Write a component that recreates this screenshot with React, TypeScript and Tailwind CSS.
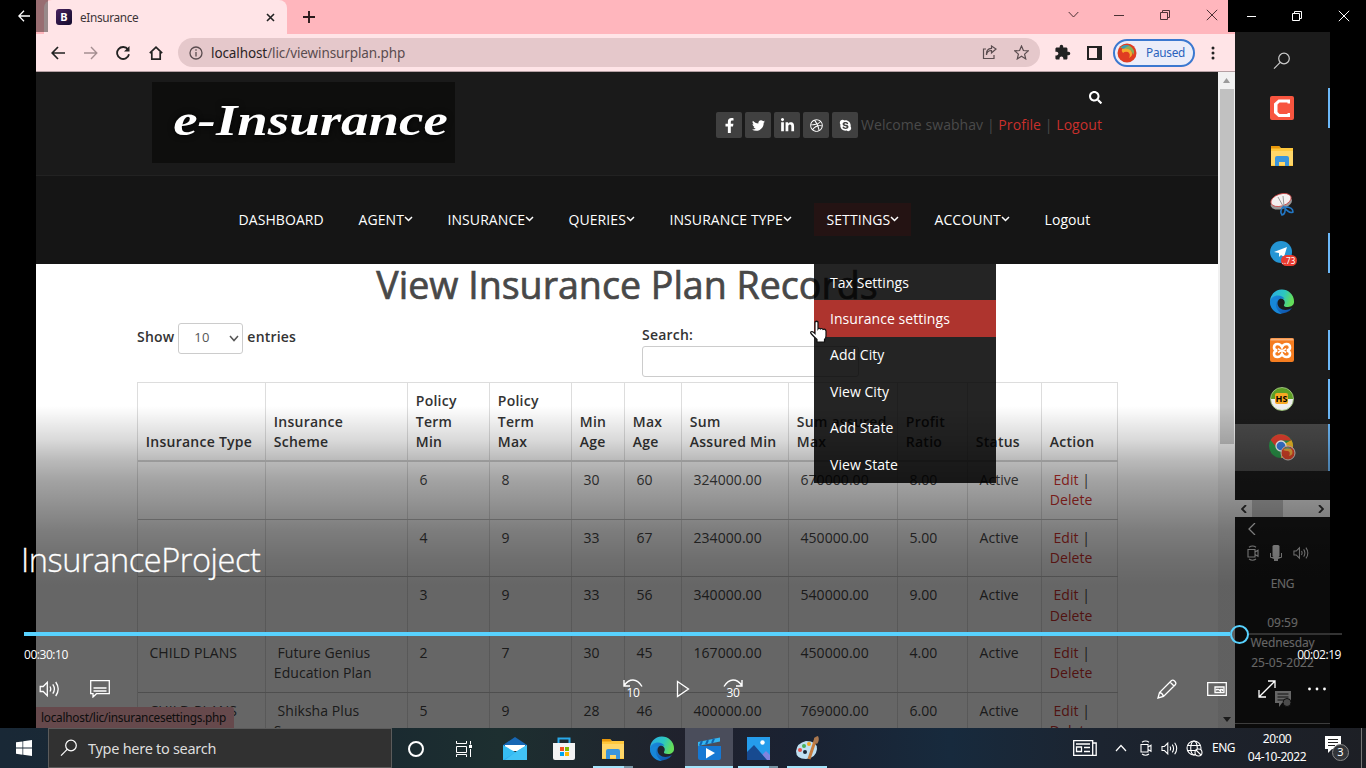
import React from 'react';
import { FaFacebookF, FaTwitter, FaLinkedinIn, FaDribbble, FaSkype, FaSearch } from 'react-icons/fa';
import { MdExtension } from 'react-icons/md';

type SvgProps = { className?: string };

const Stroke = ({ className = '', w = 16, h = 16, sw = 1, children }: { className?: string; w?: number; h?: number; sw?: number; children: React.ReactNode }) => (
  <svg className={`shrink-0 ${className}`} width={w} height={h} viewBox={`0 0 ${w} ${h}`} fill="none" stroke="currentColor" strokeWidth={sw}>
    {children}
  </svg>
);

const Chevron = () => (
  <Stroke w={9} h={6} sw={1.5}><path d="M1 1l3.5 3.5L8 1" /></Stroke>
);

const Restore = ({ className = '' }: SvgProps) => (
  <Stroke w={12} h={12} className={className}>
    <path d="M1.5 3.5h7v7h-7zM3.5 3.5v-2h7v7h-2" />
  </Stroke>
);

const Cross = ({ className = '' }: SvgProps) => (
  <Stroke w={12} h={12} className={className}><path d="M.8.8l10.4 10.4M11.2.8L.8 11.2" /></Stroke>
);

const Magnifier = ({ className = '' }: SvgProps) => (
  <Stroke w={18} h={18} sw={1.2} className={className}>
    <circle cx="11" cy="6.5" r="5.3" /><path d="M7.2 10.4L1 16.7" />
  </Stroke>
);

const Speaker = ({ className = '' }: SvgProps) => (
  <Stroke w={22} h={18} sw={1.3} className={className}>
    <path d="M1.2 6.5h3L8.3 2.300v13.400L4.200 11.500h-3zM11 6.500q1.500 2.500 0 5M13.800 4.300q3.200 4.700 0 9.400M16.700 2q5 7 0 14" />
  </Stroke>
);

const Meet = ({ className = '' }: SvgProps) => (
  <Stroke w={14} h={16} sw={1.1} className={className}>
    <path d="M2 4.500h7v7.500H2zM9 7l3-1.800v6L9 9.500M3 2.300Q6.500-.3 10 2.300M3 14q3.500 2.500 7 0" />
  </Stroke>
);

const Folder = () => (
  <svg width="24" height="22" viewBox="0 0 24 22">
    <path d="M1 1h8l2 2h12v18H1z" fill="#ffc83d" /><path d="M1 1h8l1.500 2.500H1z" fill="#e8970a" />
    <path d="M1 6h22v14H1z" fill="#ffd768" />
    <path d="M5 21v-8q0-2 2-2h10q2 0 2 2v8h-4v-4H9v4z" fill="#3a95dc" />
  </svg>
);

const Edge = () => (
  <svg width="26" height="26" viewBox="0 0 26 26">
    <defs>
      <linearGradient id="eg1" x1="0" y1="0" x2="1" y2=".3"><stop offset="0" stopColor="#2aa9e8" /><stop offset=".6" stopColor="#2cc7c0" /><stop offset="1" stopColor="#63dd5a" /></linearGradient>
      <linearGradient id="eg2" x1="0" y1="0" x2="1" y2="1"><stop offset="0" stopColor="#1b8fe0" /><stop offset="1" stopColor="#0d4fa8" /></linearGradient>
    </defs>
    <path d="M1 13a12 12 0 0 1 24-1c.500 4-2.500 6-6 6-3 0-4.500-1-4-2 2-3 0-7-5-7-5 0-8 2-9 4z" fill="url(#eg1)" />
    <path d="M1 13c0-4 4-6.500 8-6.500 3 0 5.500 1.500 6.500 3.500-4-1.500-7 .5-7 4 0 5 5 8 11 6.500 1.500-.4 2.500-.9 3.500-1.500A12 12 0 0 1 1 13z" fill="url(#eg2)" />
    <path d="M9 10.500c-4 4-2 11 4 14.400C6 25 1 19.500 1 13c2-2 5-3 8-2.500z" fill="#1787d8" />
  </svg>
);

const SocialBox = ({ children }: { children: React.ReactNode }) => (
  <div className="flex h-[26px] w-[26px] items-center justify-center rounded-[2px] bg-[#404040] text-[13px] text-white">{children}</div>
);

const navItems: [string, string, boolean][] = [
  ['DASHBOARD', 'w-[120px]', false],
  ['AGENT', 'w-[89px]', true],
  ['INSURANCE', 'w-[121px]', true],
  ['QUERIES', 'w-[101px]', true],
  ['INSURANCE TYPE', 'w-[157px]', true],
  ['SETTINGS', 'w-[108px]', true],
  ['ACCOUNT', 'w-[110px]', true],
  ['Logout', 'w-[60px]', false],
];

const menu = ['Tax Settings', 'Insurance settings', 'Add City', 'View City', 'Add State', 'View State'];

const heads = ['Insurance Type', 'Insurance\nScheme', 'Policy\nTerm\nMin', 'Policy\nTerm\nMax', 'Min\nAge', 'Max\nAge', 'Sum\nAssured Min', 'Sum assured\nMax', 'Profit\nRatio', 'Status', 'Action'];
const rows: string[][] = [
  ['', '', '6', '8', '30', '60', '324000.00', '670000.00', '8.00', 'Active'],
  ['', '', '4', '9', '33', '67', '234000.00', '450000.00', '5.00', 'Active'],
  ['', '', '3', '9', '33', '56', '340000.00', '540000.00', '9.00', 'Active'],
  ['CHILD PLANS', 'Future Genius\nEducation Plan', '2', '7', '30', '45', '167000.00', '450000.00', '4.00', 'Active'],
  ['CHILD PLANS', 'Shiksha Plus\nSuper', '5', '9', '28', '46', '400000.00', '769000.00', '6.00', 'Active'],
];
const cols = 'grid grid-cols-[128px_142px_82px_82px_53px_57px_107px_109px_70px_74px_76px]';

function ChromeBar() {
  return (
    <div className="flex h-[72px] flex-col bg-[#ffe4e7] font-['Noto_Sans',sans-serif]">
      <div className="flex h-[34px] bg-[#ffb6bd]">
        <div className="w-2 rounded-br-[8px] bg-[#ffb6bd]" />
        <div className="flex h-[34px] w-[243px] items-center rounded-t-[8px] bg-[#ffe4e7] pl-3 pr-[12px]">
          <div className="flex h-4 w-4 items-center justify-center rounded-[3px] bg-gradient-to-br from-[#4a2360] to-[#120a2c] text-[11px] font-bold text-white">B</div>
          <span className="ml-[8px] mt-px flex-1 text-[11.8px] tracking-[-0.35px] text-[#3c3437]">eInsurance</span>
          <Stroke w={9} h={9} sw={1.6} className="text-[#222]"><path d="M1 1l7 7M8 1L1 8" /></Stroke>
        </div>
        <div className="flex flex-1 items-center pl-[16px] text-[#2a1a1c]">
          <Stroke w={12} h={12} sw={1.9}><path d="M6 0v12M0 6h12" /></Stroke>
        </div>
        <div className="flex h-[29px] items-center gap-[35px] pr-[17px] text-[#4c3235]">
          <Stroke w={11} h={7}><path d="M.7 1l4.800 5L10.300 1" /></Stroke>
          <Stroke w={10} h={10}><path d="M0 5.500h10" /></Stroke>
          <Restore />
          <Cross />
        </div>
      </div>
      <div className="flex h-[37px] items-center pl-[15px] text-[#222]">
        <div className="flex w-[127px] items-center gap-[18.500px]">
          <Stroke w={14} h={14} sw={1.7}><path d="M14 7H1.500M7 1L1.200 7 7 13" /></Stroke>
          <Stroke w={14} h={14} sw={1.4} className="text-[#a58f92]"><path d="M0 7h12.500M7 1l5.800 6L7 13" /></Stroke>
          <Stroke w={14} h={14} sw={1.8}><path d="M12 3.500A6 6 0 1 0 13 8.200" /><path d="M13.500 0v5.500H8z" fill="currentColor" stroke="none" /></Stroke>
          <Stroke w={14} h={14} sw={1.7}><path d="M.8 7.200L7 1.200l6.200 6M2.800 6v7.200h8.400V6" /></Stroke>
        </div>
        <div className="flex h-[29px] w-[862px] items-center rounded-full bg-[#e5c8cb] pl-[11px] pr-[11px] text-[#5a4c4f]">
          <Stroke w={14} h={14} sw={1.3}><circle cx="7" cy="7" r="6" /><path d="M7 6v4.500M7 3.300v1.500" /></Stroke>
          <span className="ml-[8px] mt-px flex-1 text-[13.500px] tracking-[-0.100px]"><span className="text-[#2c2426]">localhost</span>/lic/viewinsurplan.php</span>
          <Stroke w={15} h={15} sw={1.2} className="mr-[17px]"><path d="M4 4H1.500v9.500H12V10M4.500 10Q5 5.500 9.500 5.500V8l4.500-4L9.500 1v2.300Q4 3.500 4.500 10z" /></Stroke>
          <Stroke w={15} h={15} sw={1.2}><path d="M7.500 1l1.900 4.500 4.900.4-3.700 3.200 1.100 4.800-4.200-2.600-4.200 2.600 1.100-4.800L.7 5.900l4.900-.4z" /></Stroke>
        </div>
        <MdExtension className="ml-[14px] h-[17px] w-[17px]" />
        <div className="ml-[16px] h-[14px] w-[15px] border-2 border-r-[5px] border-[#222]" />
        <div className="ml-[11px] flex h-[28px] w-[82px] items-center rounded-full border-2 border-[#3b78d0] bg-[#ecedf9] pl-[2px]">
          <svg width="20" height="20" viewBox="0 0 20 20"><circle cx="10" cy="10" r="9.500" fill="#e03c22" /><path d="M5 6q5-4 9 1 3 5-2 8 2-4-1-6-3-1-5 1-2-2-1-4z" fill="#f6a82c" /><path d="M3 5a8 8 0 0 1 13 1q2 3 0 6-1-5-5-6-4-1-8-1z" fill="#86b05a" /><path d="M4 4a8 8 0 0 1 9-1q-4 0-6 3-2-1-3-2z" fill="#3a9cb4" /></svg>
          <span className="ml-[9px] text-[11.800px] tracking-[-0.250px] text-[#2a62bd]">Paused</span>
        </div>
        <svg className="ml-[16px]" width="4" height="14" viewBox="0 0 4 14" fill="currentColor"><circle cx="2" cy="2" r="1.500" /><circle cx="2" cy="7" r="1.500" /><circle cx="2" cy="12" r="1.500" /></svg>
      </div>
      <div className="h-px bg-[#b5a0a3]" />
    </div>
  );
}

function Site() {
  return (
    <div className="flex h-[656px] w-[1199px] font-['Open_Sans',sans-serif] text-[14px]">
      <div className="flex h-full w-[1182px] flex-col overflow-hidden bg-white">
        <div className="flex h-[103px] shrink-0 justify-between bg-[#1a1a1a] pl-[116px] pr-[116px] pt-[10px]">
          <div className="flex h-[81px] w-[303px] items-center justify-center bg-[#0e0e0d]">
            <span className="-mt-[4px] ml-[14px] block scale-x-[1.220] whitespace-nowrap font-['Liberation_Serif',serif] text-[45px] font-bold italic leading-none text-white [text-shadow:0_0_6px_#000]">e-Insurance</span>
          </div>
          <div className="flex flex-col items-end pt-[9px]">
            <FaSearch className="h-[13px] w-[13px] text-white" />
            <div className="mt-2 flex items-center">
              <div className="flex gap-[3px]">
                <SocialBox><FaFacebookF className="h-[15px] w-[11px]" /></SocialBox>
                <SocialBox><FaTwitter /></SocialBox>
                <SocialBox><FaLinkedinIn className="h-[15px] w-[15px]" /></SocialBox>
                <SocialBox><FaDribbble /></SocialBox>
                <SocialBox><FaSkype /></SocialBox>
              </div>
              <span className="-mt-[2px] ml-[3px] w-[241px] whitespace-pre tracking-[0.070px] text-[#4a4a4a]">Welcome swabhav | <span className="text-[#c9302c]">Profile</span> | <span className="text-[#c9302c]">Logout</span></span>
            </div>
          </div>
        </div>
        <div className="relative flex h-[89px] shrink-0 items-center border-t border-[#222] bg-[#151515] pb-[2px] pl-[202px] text-white">
          {navItems.map(([t, w, arrow]) => (
            <div key={t} className={`${w} flex items-center`}>
              <span className={`-ml-3 flex h-[33px] items-center whitespace-nowrap px-3 pl-[12.500px] tracking-[0.080px] ${t === 'SETTINGS' ? 'bg-[#241313]' : ''}`}>
                {t}{arrow && <Chevron />}
              </span>
            </div>
          ))}
          <div className="absolute left-[778px] top-[88px] z-10 flex h-[219px] w-[182px] flex-col bg-black/[0.86]">
            {menu.map((m) => (
              <div key={m} className={`flex h-[36.400px] items-center pl-4 tracking-[0.050px] ${m === 'Insurance settings' ? 'bg-[#ae342e]' : ''}`}>{m}</div>
            ))}
            <svg className="absolute -left-[5px] top-[56px]" width="20" height="24" viewBox="0 0 20 24"><path d="M6 2q1.500-1.500 3 0v7q1-1.500 2.500 0 1.500-1.200 2.500.5 2.500-1 3 1.500v5q0 2-1.500 3.500V22H8v-2.500Q5 17 2 13.500q-1-2 1-2 1.500.5 3 2z" fill="#fff" stroke="#111" strokeWidth="1.200" /></svg>
          </div>
        </div>
        <div className="flex flex-col pl-[101px]">
          <h1 className="w-[980px] whitespace-nowrap text-center text-[37.600px] font-medium leading-[42px] text-[#484848] [-webkit-text-stroke:0.700px_#484848]">View Insurance Plan Records</h1>
          <div className="flex h-[76px] font-semibold text-[#333]">
            <div className="flex h-[30px] w-[505px] items-center pt-[32px] tracking-[0.200px]">
              <span className="-mt-[3px]">Show</span>
              <div className="ml-[4px] flex h-[31px] w-[65px] shrink-0 items-center justify-between rounded-[3px] border border-[#ccc] pl-[15px] pr-[3px] text-[13px] font-normal text-[#555]">10<Stroke w={10} h={7} sw={1.500}><path d="M1 1l4 4.500L9 1" /></Stroke></div>
              <span className="-mt-[3px] ml-[4px]">entries</span>
            </div>
            <div className="pt-[20px]">
              <div className="-mt-px h-[21px] leading-[20px] tracking-[0.200px]">Search:</div>
              <div className="h-[31px] w-[217px] rounded-[3px] border border-[#ccc]" />
            </div>
          </div>
          <div className="w-[981px] border-l border-t border-[#ddd] leading-[20.200px]">
            <div className={`${cols} h-[79px] border-b-2 border-[#d4d4d4] font-semibold tracking-[0.250px] text-[#333]`}>
              {heads.map((h, i) => (
                <div key={i} className="flex items-end whitespace-pre border-r border-[#ddd] pb-[8px] pl-[7.800px]">{h}</div>
              ))}
            </div>
            {rows.map((r, k) => (
              <div key={k} className={`${cols} h-[57.700px] border-b border-[#c4c4c4] tracking-[0.060px] text-[#444]`}>
                {r.map((c, i) => (
                  <div key={i} className="whitespace-pre border-r border-[#ddd] pl-[7.800px] pt-[8px]">{c && ' ' + c}</div>
                ))}
                <div className="whitespace-pre border-r border-[#ddd] pl-[7.800px] pt-[8px]"><span className="text-[#c9302c]"> Edit</span> |{'\n'}<span className="text-[#c9302c]">Delete</span></div>
              </div>
            ))}
          </div>
        </div>
      </div>
      <div className="flex w-[17px] flex-col items-center justify-between bg-[#f1f1f1]">
        <div className="flex flex-col items-center">
          <svg className="my-[6px]" width="7" height="5" viewBox="0 0 7 5"><path d="M0 5l3.500-5L7 5z" fill="#9b9b9b" /></svg>
          <div className="h-[355px] w-[14px] bg-[#c1c1c1]" />
        </div>
        <svg className="mb-[6px]" width="8" height="5" viewBox="0 0 8 5"><path d="M0 0l4 5 4-5z" fill="#444" /></svg>
      </div>
    </div>
  );
}

const dockIcons: { icon: React.ReactNode; bar: boolean; active?: boolean }[] = [
  { icon: <Magnifier className="mt-[3px] text-[#ccc]" />, bar: false },
  { icon: <svg width="26" height="26" viewBox="0 0 26 26"><rect x="1" y="1" width="24" height="24" rx="2" fill="#f8553f" /><path d="M21 8.500V4.500H9.500L5 8.500v9.500l4.500 4H21v-4h-2.500v1H10.500L8.500 17V9.500L10.500 7.500h8v1z" fill="#fff" /></svg>, bar: true },
  { icon: <Folder />, bar: false },
  { icon: <svg width="26" height="26" viewBox="0 0 26 26"><ellipse cx="12" cy="11" rx="11" ry="6" transform="rotate(-18 12 10)" fill="#999" /><ellipse cx="12" cy="8" rx="10.500" ry="6" transform="rotate(-18 12 8)" fill="#f4f0f0" stroke="#c44" strokeWidth=".8" /><path d="M9 5l5 9M14 4l1 10" stroke="#999" fill="none" /><path d="M15 14q-5 5-2 9 4-1 3-8 8 0 8 5-4 2-9-5" fill="none" stroke="#2277c5" strokeWidth="1.600" /></svg>, bar: false },
  { icon: <div className="relative h-[26px] w-[26px]"><svg width="24" height="24" viewBox="0 0 24 24"><circle cx="12" cy="12" r="11" fill="#2595d4" /><path d="M5 12l13-5-3 10-3-2-2 2v-4z" fill="#fff" /></svg><span className="absolute left-[12px] top-[15px] flex h-[11px] w-[16px] items-center justify-center rounded-full bg-[#ea3b30] font-['Noto_Sans',sans-serif] text-[8px] text-white">..73</span></div>, bar: true },
  { icon: <Edge />, bar: false },
  { icon: <svg width="26" height="26" viewBox="0 0 26 26"><rect x="1" y="1" width="24" height="24" rx="2" fill="#f57d20" /><path d="M1.500 1.500h23v2h-23z" fill="#f9b27a" /><path d="M8.500 7q3 0 4.500 3Q14.500 7 17.500 7 21 7 21 10.500q0 2-2 2.500v1q2 .5 2 3 0 3-3.500 3-3 0-4.500-3-1.500 3-4.500 3Q5 20 5 17q0-2.500 2-3v-1q-2-.5-2-2.500Q5 7 8.500 7z" fill="none" stroke="#fff" strokeWidth="2.600" /><path d="M9 11.500q4 4 8 0M9 15.500q4-3 8 0" fill="none" stroke="#fff" strokeWidth="1.600" /></svg>, bar: true },
  { icon: <div className="flex h-[24px] w-[24px] items-center justify-center rounded-full border border-[#9cc07a] bg-gradient-to-b from-[#5d9f25] from-50% to-[#eee] to-50%"><span className="rounded-[2px] bg-[#f7a823] px-px font-['Open_Sans',sans-serif] text-[9px] font-bold leading-[11px] text-black">HS</span></div>, bar: true },
  { icon: <svg width="28" height="28" viewBox="0 0 28 28"><circle cx="13" cy="13" r="12" fill="#2b9a4b" /><path d="M13 13l10.400-6A12 12 0 0 1 13 25z" fill="#f5bd27" /><path d="M2.600 7A12 12 0 0 1 23.400 7.500H13L9 15z" fill="#e5402f" /><circle cx="13" cy="13" r="5" fill="#3b7de0" stroke="#fff" strokeWidth="1.300" /><circle cx="20" cy="20" r="7" fill="#dd4428" stroke="#d5d0cc" /><path d="M15 17q5-5 9 0 2 5-3 6 2-4-1-5-3 0-5-1z" fill="#efaa3c" /><path d="M15.500 16q4-4 8 0-4-1-8 0z" fill="#5aa08a" /></svg>, bar: true, active: true },
];

function Dock() {
  return (
    <div className="flex h-[696px] w-[95px] flex-col bg-[#1b1b1b] pt-[3px] font-['Noto_Sans',sans-serif] text-[12px] text-white">
      {dockIcons.map((d, i) => (
        <div key={i} className={`flex h-[48.500px] shrink-0 items-center ${d.active ? 'border-b border-t border-[#1b1b1b] bg-[#4a4a4a]' : ''}`}>
          <div className="flex w-[93px] justify-center">{d.icon}</div>
          {d.bar && <div className={`w-[2px] bg-[#6cb8f8] ${d.active ? 'h-full' : 'h-[40px]'}`} />}
        </div>
      ))}
      <div className="mt-[28.500px] flex h-[17px] shrink-0 items-center bg-[#f1f1f1] text-[#333]">
        <div className="flex w-[17px] justify-center"><Stroke w={6} h={8} sw={1.800}><path d="M5 0L1 4l4 4" /></Stroke></div>
        <div className="h-full w-[31px] bg-[#c1c1c1]" />
        <div className="flex flex-1 justify-end pr-[6px]"><Stroke w={6} h={8} sw={1.800}><path d="M1 0l4 4-4 4" /></Stroke></div>
      </div>
      <Stroke w={8} h={12} sw={1.300} className="ml-[13px] mt-[6px]"><path d="M7 0L1 6l6 6" /></Stroke>
      <div className="mt-[10px] flex h-[16px] items-center pl-[11px]">
        <Meet />
        <svg className="ml-[10px]" width="12" height="16" viewBox="0 0 12 16" fill="currentColor"><rect x="2.500" y="0" width="7" height="12" rx="1.500" /><path d="M0 8h1v4h10V8h1v4.500L8 14v2H4v-2l-4-1.500z" /></svg>
        <Speaker className="ml-[11px] h-[14px] w-[17px]" />
      </div>
      <div className="mt-[13px] text-center leading-[20px] tracking-[-0.300px]">ENG</div>
      <div className="mt-[19px] text-center leading-[20px]">09:59<br /><span className="tracking-[-0.150px]">Wednesday</span><br />25-05-2022</div>
      <div className="mt-[17px] flex justify-center"><svg width="18" height="18" viewBox="0 0 18 18"><path d="M1 1h16v12H8l-3 4v-4H1z" fill="#fff" /><path d="M3.500 4h11M3.500 7h11M3.500 10h7" stroke="#222" /><circle cx="13" cy="12.500" r="4" fill="#bbb" stroke="#222" /></svg></div>
      <div className="mt-auto mb-[4px] h-px bg-[#999]" />
    </div>
  );
}

const Ctl = ({ children }: { children: React.ReactNode }) => <div className="flex h-[24px] w-[50px] items-center justify-center">{children}</div>;

function PlayerOverlay() {
  return (
    <div className="absolute inset-0 flex flex-col font-['Open_Sans',sans-serif] text-white">
      <div className="flex h-[32px] shrink-0 items-center justify-between">
        <div className="flex h-full w-[48px] items-center bg-black/40 pl-[18px]">
          <Stroke w={12} h={12} sw={1.300}><path d="M12 6H1M6 .8L.8 6 6 11.200" /></Stroke>
        </div>
        <div className="flex h-full w-[138px] items-center gap-[35px] bg-black pl-[19px]">
          <Stroke w={9} h={10}><path d="M0 5.500h9" /></Stroke>
          <Restore />
          <Cross />
        </div>
      </div>
      <div className="mt-[368px] flex h-[328px] flex-col bg-[linear-gradient(to_bottom,rgba(0,0,0,0)_6px,rgba(0,0,0,.15)_40px,rgba(0,0,0,.27)_60px,rgba(0,0,0,.36)_80px,rgba(0,0,0,.42)_100px,rgba(0,0,0,.51)_130px,rgba(0,0,0,.57)_160px,rgba(0,0,0,.6)_185px)] pt-[140px]">
        <div className="h-[40px] whitespace-nowrap pl-[21px] text-[32.500px] font-light leading-[40px] tracking-[-0.430px] [-webkit-text-stroke:0.300px_#fff]">InsuranceProject</div>
        <div className="mt-[44px] flex h-[20px] items-center pl-[24px]">
          <div className="h-[4px] w-[1206px] bg-[#58d2ff]" />
          <div className="h-[19px] w-[19px] rounded-full border-2 border-[#58d2ff]" />
          <div className="h-[2px] w-[93px] bg-[#333]" />
        </div>
        <div className="flex justify-between pl-[24px] pr-[25px] pt-[2px] text-[12px] leading-[18px] tracking-[-0.450px]"><span>00:30:10</span><span>00:02:19</span></div>
        <div className="flex justify-between px-[24px] pt-[13px]">
          <div className="flex w-[200px] pl-px">
            <Ctl><Speaker /></Ctl>
            <Ctl><Stroke w={20} h={18} sw={1.300}><path d="M.7.7h18.600v13H6.500L3 17v-3.300H.7zM3.500 8h13M3.500 11h13" /></Stroke></Ctl>
          </div>
          <div className="flex">
            <Ctl><div className="flex flex-col items-center"><Stroke w={20} h={9} sw={1.400}><path d="M1 1v6h6M1.500 6Q5 1 10 1t9 6.500" /></Stroke><span className="-mt-px text-[12px] leading-[12px] tracking-[-0.400px]">10</span></div></Ctl>
            <Ctl><Stroke w={14} h={18} sw={1.300}><path d="M1.500 1.500l11 7.500-11 7.500z" /></Stroke></Ctl>
            <Ctl><div className="flex flex-col items-center"><Stroke w={20} h={9} sw={1.400}><path d="M19 1v6h-6M18.500 6Q15 1 10 1T1 7.500" /></Stroke><span className="-mt-px text-[12px] leading-[12px] tracking-[-0.400px]">30</span></div></Ctl>
          </div>
          <div className="flex">
            <Ctl><Stroke w={20} h={20} sw={1.300}><path d="M1 19l1.500-5.500L14.500 1.500q1.500-1 3.300.7 1.700 1.800.7 3.300L6.500 17.500zM2.500 13.500q3 .5 4 4M13 3l4 4" /></Stroke></Ctl>
            <Ctl><Stroke w={20} h={14} sw={1.300}><path d="M.7.7h18.600v12.600H.7z" /><path d="M8 5h9v5.500H8zM9.500 8.500v-1h2l2 1.500v-1.500h2v1.500" /></Stroke></Ctl>
            <Ctl><Stroke w={18} h={18} sw={1.300}><path d="M1 17L17 1M10 1h7v7M1 10v7h7" /></Stroke></Ctl>
            <Ctl><svg width="18" height="4" viewBox="0 0 18 4" fill="#fff"><circle cx="1.500" cy="2" r="1.400" /><circle cx="9" cy="2" r="1.400" /><circle cx="16.500" cy="2" r="1.400" /></svg></Ctl>
          </div>
        </div>
      </div>
    </div>
  );
}

const TaskApp = ({ children, active, line }: { children: React.ReactNode; active?: boolean; line?: 'one' | 'many' | 'full' }) => (
  <div className={`mr-px flex h-full w-[48px] flex-col items-center ${active ? 'bg-[#4a4d5b]' : ''}`}>
    <div className="flex h-[38px] items-center pt-[3px]">{children}</div>
    {line === 'full' && <div className="h-[2px] w-full bg-[#a4e4fb]" />}
    {line === 'one' && <div className="h-[2px] w-[40px] bg-[#a4e4fb]" />}
    {line === 'many' && <div className="flex h-[2px] w-[40px]"><div className="w-[31px] bg-[#a4e4fb]" /><div className="w-[9px] bg-[#7795a4]" /></div>}
  </div>
);

function Taskbar() {
  return (
    <div className="flex h-[40px] w-full bg-[linear-gradient(to_right,#192836_0px,#1a2a30_390px,#1d2f30_500px,#20212d_690px,#1a2232_800px,#172a3d_950px,#1c2430_1100px,#1d1f25_1366px)] font-['Noto_Sans',sans-serif] text-white">
      <div className="flex w-[48px] items-center justify-center"><svg width="16" height="16" viewBox="0 0 16 16" fill="#fff"><path d="M0 2.300L6.500 1.400v6.200H0zM7.200 1.300L16 0v7.600H7.200zM0 8.400h6.500v6.300L0 13.800zM7.200 8.400H16V16l-8.800-1.200z" /></svg></div>
      <div className="flex w-[344px] items-center border border-[#5b5b5b] bg-[#313131] pl-[11px]">
        <Magnifier />
        <span className="ml-[10px] mt-px text-[14.500px] tracking-[-0.280px] text-[#ddd]">Type here to search</span>
      </div>
      <div className="flex">
        <div className="w-[48px]"><TaskApp><div className="h-[16px] w-[16px] rounded-full border-[2.500px] border-white" /></TaskApp></div>
        <div className="w-[51px]"><TaskApp><Stroke w={16} h={16}><path d="M.5 0v2.500h10V0M.5 5.500h10v6H.5zM.5 16v-2.500h10V16M14.500 0v3.500M14.500 8v8" /><path d="M13 4h3v3h-3z" fill="currentColor" stroke="none" /></Stroke></TaskApp></div>
        <TaskApp><svg width="24" height="23" viewBox="0 0 24 23"><path d="M0 8l12-8 12 8v3H0z" fill="#1767b4" /><path d="M2 8h20v6H2z" fill="#fff" /><path d="M0 8l12 7v8H0z" fill="#36bdf3" /><path d="M24 8v15H0z" fill="#2ea9ee" /><path d="M24 8v15H2l12-9z" fill="#41c3f5" /></svg></TaskApp>
        <TaskApp><svg width="24" height="24" viewBox="0 0 24 24"><path d="M6.500 7V1.500h11V7" fill="none" stroke="#29a9ea" strokeWidth="2" /><path d="M1 6h22v15q0 2-2 2H3q-2 0-2-2z" fill="#f3f3f3" /><path d="M8 10h4v4H8z" fill="#f25022" /><path d="M13 10h4v4h-4z" fill="#7fba00" /><path d="M8 15h4v4H8z" fill="#00a4ef" /><path d="M13 15h4v4h-4z" fill="#ffb900" /></svg></TaskApp>
        <TaskApp line="many"><Folder /></TaskApp>
        <TaskApp><Edge /></TaskApp>
        <div className="-ml-[2px]"><div className="h-full"><TaskApp active line="full"><svg width="25" height="24" viewBox="0 0 25 24"><path d="M1 9h23v12q0 2-2 2H3q-2 0-2-2z" fill="#1678d3" /><path d="M1 5l22-4.500v4L1 9z" fill="#35b6f1" /><path d="M5 4l-2 4.500M11 3L9 7.500M17 1.500L15 6" stroke="#0e65b0" strokeWidth="2" /><path d="M9 11l9 5-9 5.500z" fill="#fff" /></svg></TaskApp></div></div>
        <TaskApp line="many"><svg width="23" height="23" viewBox="0 0 23 23"><path d="M0 0h23v23H0z" fill="#259ceb" /><path d="M10 23l9-9 4 4v5z" fill="#7f84de" /><path d="M0 15l7-7 13 15H0z" fill="#174a90" /><circle cx="15.500" cy="5.500" r="2.200" fill="#fff" /></svg></TaskApp>
        <TaskApp line="one"><svg width="25" height="25" viewBox="0 0 25 25"><path d="M11 5q-9 2-10 10 0 8 10 8 10-1 11-10 0-8-11-8z" fill="#bfe0f2" /><circle cx="10" cy="16" r="2" fill="#182838" /><circle cx="5" cy="14" r="2" fill="#e6534b" /><circle cx="9" cy="10" r="2" fill="#49b05a" /><circle cx="14" cy="8" r="2" fill="#f5a623" /><path d="M21 2l-7 21" stroke="#c77d3f" strokeWidth="3" /><path d="M19 6q-1-5 4-6 2 4-1 8z" fill="#a9774f" /></svg></TaskApp>
      </div>
      <div className="ml-auto flex items-center text-[12px]">
        <Stroke w={24} h={16} sw={1.300}><path d="M.7.7h19v14.600H.7zM19.700 3h3.500v12.300h-4M3 4h14M3.500 7h5v4.500h-5zM11 7.500h6M11 11.500h6" /></Stroke>
        <Stroke w={12} h={8} sw={1.200} className="ml-[18px]"><path d="M1 7l5-5.500L11 7" /></Stroke>
        <Meet className="ml-[12px]" />
        <Speaker className="ml-[8px] h-[15px] w-[18px]" />
        <Stroke w={17} h={17} sw={1.100} className="ml-[7px]"><circle cx="8" cy="8" r="7" /><ellipse cx="8" cy="8" rx="3.300" ry="7" /><path d="M1.500 5.500h13M1.500 10.500h8" /><circle cx="12.500" cy="12.500" r="3.500" fill="#1c1f27" /><path d="M10 10l5 5" /></Stroke>
        <span className="ml-[9px] w-[24px] tracking-[-0.500px]">ENG</span>
        <div className="ml-[8px] w-[66px] text-center leading-[18px] tracking-[-0.430px]">20:00<br />04-10-2022</div>
        <div className="relative ml-[15px] mr-[12px] h-[24px] w-[24px]">
          <svg width="17" height="17" viewBox="0 0 17 17"><path d="M0 0h16v13H7l-4 4v-4H0z" fill="#fff" /><path d="M3 3.500h10M3 6.500h10M3 9.500h7" stroke="#222" /></svg>
          <span className="absolute left-[7px] top-[8px] flex h-[17px] w-[17px] items-center justify-center rounded-full border border-[#888] bg-[#333539] text-[11px]">3</span>
        </div>
        <div className="h-full w-[5px] border-l border-[#777]" />
      </div>
    </div>
  );
}

export default function App() {
  return (
    <div className="flex h-[768px] w-[1366px] flex-col overflow-hidden bg-black">
      <div className="relative flex h-[728px] shrink-0 overflow-hidden pl-[36px]">
        <div className="relative w-[1199px]">
          <ChromeBar />
          <Site />
          <div className="absolute bottom-0 left-0 flex h-[21px] w-[198px] items-center rounded-tr-[3px] bg-[#ffb6bd] pl-[5px] font-['Noto_Sans',sans-serif] text-[11.800px] tracking-[-0.240px] text-[#222]">localhost/lic/insurancesettings.php</div>
        </div>
        <div className="pt-[32px]"><Dock /></div>
        <PlayerOverlay />
      </div>
      <Taskbar />
    </div>
  );
}
